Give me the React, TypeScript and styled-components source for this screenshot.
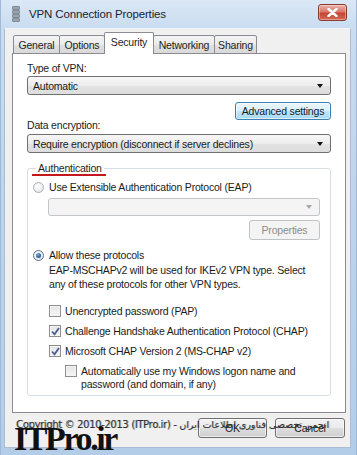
import React from "react";
import styled, { createGlobalStyle, css } from "styled-components";

const Global = createGlobalStyle`
  html, body { margin: 0; padding: 0; width: 357px; height: 455px; overflow: hidden; background: #c8daee; }
  * { box-sizing: border-box; }
`;

const Win = styled.div`
  position: relative;
  width: 357px;
  height: 455px;
  display: flex;
  flex-direction: column;
  background: linear-gradient(180deg, #dbe8f6 0px, #c9dcf0 28px, #bfd4ec 200px, #b3cde9 100%);
  border-left: 1px solid #9fb9d8;
  border-right: 1px solid #9fb9d8;
  font-family: "Liberation Sans", Arial, sans-serif;
  font-size: 10.5px;
  letter-spacing: -0.2px;
  color: #1b1b1b;
  overflow: hidden;
`;

const TitleBar = styled.div`
  height: 28px;
  flex: none;
  display: flex;
  align-items: center;
  padding: 0 9px 0 11px;
`;

const Title = styled.div`
  margin-left: 9px;
  font-size: 11.5px;
  letter-spacing: -0.15px;
  color: #1a2433;
`;

const CloseBtn = styled.div`
  margin-left: auto;
  margin-top: -3px;
  width: 29px;
  height: 17px;
  border: 1px solid #8a3a30;
  border-radius: 3px;
  background: linear-gradient(180deg, #eab3aa 0%, #d9796c 45%, #c54534 55%, #d36a52 100%);
  display: flex;
  align-items: center;
  justify-content: center;
  box-shadow: inset 0 0 0 1px rgba(255, 255, 255, 0.35);
`;

const Client = styled.div`
  flex: 1;
  margin: 0 5px 7px 3px;
  background: #f0f0f0;
  display: flex;
  flex-direction: column;
  padding-top: 3px;
  border: 1px solid #a9bdd4;
  border-top-color: #eef4fa;
`;

const TabStrip = styled.div`
  display: flex;
  align-items: flex-end;
  height: 22px;
  padding-left: 9px;
  position: relative;
  z-index: 1;
  margin-bottom: -1px;
`;

const Tab = styled.div<{ $w: number; $sel?: boolean }>`
  width: ${(p) => p.$w}px;
  margin-left: -1px;
  display: flex;
  align-items: center;
  justify-content: center;
  border: 1px solid #898c95;
  border-bottom: none;
  border-radius: 2px 2px 0 0;
  color: #1e1e1e;
  font-size: 10.5px;
  ${(p) =>
    p.$sel
      ? css`
          height: 22px;
          background: #ffffff;
          padding-bottom: 3px;
        `
      : css`
          height: 19px;
          background: linear-gradient(180deg, #f4f4f4 0%, #ebebeb 50%, #e1e1e1 51%, #d9d9d9 100%);
          border-bottom: 1px solid #898c95;
        `}
`;

const Panel = styled.div`
  margin: 0 4px 0 7px;
  height: 360px;
  flex: none;
  background: #ffffff;
  border: 1px solid #898c95;
  padding: 8px 14px 0 14px;
  display: flex;
  flex-direction: column;
`;

const Label = styled.div<{ $mt?: number }>`
  line-height: 13px;
  height: 13px;
  margin-top: ${(p) => p.$mt ?? 0}px;
  white-space: nowrap;
`;

const Combo = styled.div<{ $disabled?: boolean; $mt?: number; $ml?: number; $h?: number }>`
  height: ${(p) => p.$h ?? 19}px;
  margin-top: ${(p) => p.$mt ?? 0}px;
  margin-left: ${(p) => p.$ml ?? 0}px;
  border: 1px solid ${(p) => (p.$disabled ? "#c3c6c9" : "#707070")};
  border-radius: 3px;
  background: ${(p) =>
    p.$disabled ? "#f4f4f4" : "linear-gradient(180deg, #f7f7f7 0%, #ececec 50%, #e3e3e3 51%, #dddddd 100%)"};
  display: flex;
  align-items: center;
  padding: 0 7px 0 5px;
  white-space: nowrap;
`;

const Caret = styled.span<{ $disabled?: boolean }>`
  margin-left: auto;
  width: 0;
  height: 0;
  border-left: 3.5px solid transparent;
  border-right: 3.5px solid transparent;
  border-top: 4px solid ${(p) => (p.$disabled ? "#a8a8a8" : "#111")};
`;

const BtnRow = styled.div<{ $mt?: number }>`
  display: flex;
  justify-content: flex-end;
  margin-top: ${(p) => p.$mt ?? 0}px;
`;

const Button = styled.div<{ $w: number; $h?: number; $kind?: "hot" | "disabled" | "normal" }>`
  width: ${(p) => p.$w}px;
  height: ${(p) => p.$h ?? 20}px;
  border-radius: 3px;
  display: flex;
  align-items: center;
  justify-content: center;
  white-space: nowrap;
  ${(p) =>
    p.$kind === "hot"
      ? css`
          border: 1px solid #3c7fb1;
          background: linear-gradient(180deg, #eaf6fd 0%, #d9f0fc 50%, #bee6fd 51%, #a7d9f5 100%);
          color: #1b1b1b;
          box-shadow: inset 0 0 0 1px rgba(255, 255, 255, 0.6);
        `
      : p.$kind === "disabled"
      ? css`
          border: 1px solid #c0c3c6;
          background: #f4f4f4;
          color: #8c8c8c;
        `
      : css`
          border: 1px solid #707070;
          background: linear-gradient(180deg, #f2f2f2 0%, #ebebeb 50%, #dddddd 51%, #cfcfcf 100%);
          color: #1b1b1b;
          box-shadow: inset 0 0 0 1px rgba(255, 255, 255, 0.6);
        `}
`;

const Group = styled.fieldset`
  margin: 9px 0 0 0;
  padding: 0 10px 4px 5px;
  border: 1px solid #d5dfe5;
  border-radius: 3px;
  min-width: 0;
  display: flex;
  flex-direction: column;
`;

const Legend = styled.legend`
  position: relative;
  margin-left: 3px;
  padding: 0 2px;
  line-height: 13px;
  color: #1e1e1e;
  &::after {
    content: "";
    position: absolute;
    left: -4px;
    right: -2px;
    bottom: -1px;
    height: 2px;
    background: #c4161c;
  }
`;

const OptRow = styled.div<{ $mt?: number; $ml?: number }>`
  display: flex;
  align-items: flex-start;
  margin-top: ${(p) => p.$mt ?? 0}px;
  margin-left: ${(p) => p.$ml ?? 0}px;
  line-height: 13px;
`;

const RadioBox = styled.span<{ $on?: boolean }>`
  width: 11px;
  height: 11px;
  margin: 1px 5px 0 0;
  flex: none;
  border-radius: 50%;
  border: 1px solid ${(p) => (p.$on ? "#5a6f8e" : "#a9aeb4")};
  background: radial-gradient(circle at 40% 35%, #ffffff 0%, #eceef0 60%, #d6d9dd 100%);
  display: flex;
  align-items: center;
  justify-content: center;
  &::after {
    content: "";
    display: ${(p) => (p.$on ? "block" : "none")};
    width: 5px;
    height: 5px;
    border-radius: 50%;
    background: radial-gradient(circle at 40% 35%, #7eb3de 0%, #24619f 60%, #12365f 100%);
  }
`;

const CheckBox = styled.span`
  width: 12px;
  height: 12px;
  margin: 0 4px 0 0;
  flex: none;
  border: 1px solid #8f8f8f;
  background: linear-gradient(180deg, #e4e4e4 0%, #f6f6f6 100%);
  box-shadow: inset 0 0 0 1px #f4f4f4;
  display: flex;
  align-items: center;
  justify-content: center;
`;

const Text = styled.div<{ $mt?: number; $ml?: number }>`
  margin-top: ${(p) => p.$mt ?? 0}px;
  margin-left: ${(p) => p.$ml ?? 0}px;
  line-height: 14px;
`;

const Footer = styled.div`
  display: flex;
  justify-content: flex-end;
  gap: 8px;
  padding: 5px 5px 0 0;
`;

const Copyright = styled.div`
  position: absolute;
  left: 15px;
  top: 419px;
  font-family: "DejaVu Sans", "Liberation Sans", sans-serif;
  font-size: 10px;
  letter-spacing: -0.35px;
  line-height: 12px;
  color: #2e2e2e;
  white-space: nowrap;
  text-shadow: 1px 0 0 rgba(40, 40, 40, 0.35);
  direction: ltr;
`;

const Persian = styled.span`
  font-size: 9.5px;
  letter-spacing: 0;
`;

const Brand = styled.div`
  position: absolute;
  left: 13px;
  top: 422px;
  font-family: "Liberation Serif", "Times New Roman", serif;
  font-weight: bold;
  font-size: 34px;
  line-height: 34px;
  letter-spacing: -2.4px;
  color: #111;
  white-space: nowrap;
`;

const VpnIcon = () => (
  <svg width="8" height="17" viewBox="0 0 8 17">
    {[0, 4, 8, 12].map((y) => (
      <rect key={y} x="0.5" y={y + 0.5} width="7" height="3" rx="0.5" fill="#9aa3ad" stroke="#6d7680" strokeWidth="0.7" />
    ))}
  </svg>
);

const XIcon = () => (
  <svg width="11" height="9" viewBox="0 0 11 9">
    <path d="M1.5 1 L9.5 8 M9.5 1 L1.5 8" stroke="#fff" strokeWidth="2.4" strokeLinecap="round" />
  </svg>
);

const Tick = () => (
  <svg width="9" height="9" viewBox="0 0 9 9">
    <path d="M1 4.5 L3.5 7.3 L8 1" fill="none" stroke="#4a5d8f" strokeWidth="1.8" />
  </svg>
);

const Radio = ({ on, children }: { on?: boolean; children: React.ReactNode }) => (
  <>
    <RadioBox $on={on} />
    <span>{children}</span>
  </>
);

const Check = ({ on }: { on?: boolean }) => <CheckBox>{on ? <Tick /> : null}</CheckBox>;

export default function App() {
  return (
    <Win>
      <Global />
      <TitleBar>
        <VpnIcon />
        <Title>VPN Connection Properties</Title>
        <CloseBtn>
          <XIcon />
        </CloseBtn>
      </TitleBar>
      <Client>
        <TabStrip>
          <Tab $w={47}>General</Tab>
          <Tab $w={46}>Options</Tab>
          <Tab $w={50} $sel>
            Security
          </Tab>
          <Tab $w={62}>Networking</Tab>
          <Tab $w={43}>Sharing</Tab>
        </TabStrip>
        <Panel>
          <Label>Type of VPN:</Label>
          <Combo $mt={1}>
            Automatic
            <Caret />
          </Combo>
          <BtnRow $mt={7}>
            <Button $w={96} $h={18} $kind="hot">
              Advanced settings
            </Button>
          </BtnRow>
          <Label $mt={-1}>Data encryption:</Label>
          <Combo $mt={2}>
            Require encryption (disconnect if server declines)
            <Caret />
          </Combo>
          <Group>
            <Legend>Authentication</Legend>
            <OptRow $mt={6}>
              <Radio>Use Extensible Authentication Protocol (EAP)</Radio>
            </OptRow>
            <Combo $disabled $mt={4} $ml={15} $h={18}>
              <Caret $disabled />
            </Combo>
            <BtnRow $mt={4}>
              <Button $w={71} $h={20} $kind="disabled">
                Properties
              </Button>
            </BtnRow>
            <OptRow $mt={9}>
              <Radio on>Allow these protocols</Radio>
            </OptRow>
            <Text $mt={1} $ml={16}>
              EAP-MSCHAPv2 will be used for IKEv2 VPN type. Select
              <br />
              any of these protocols for other VPN types.
            </Text>
            <OptRow $mt={14} $ml={16}>
              <Check />
              <span>Unencrypted password (PAP)</span>
            </OptRow>
            <OptRow $mt={7} $ml={16}>
              <Check on />
              <span>Challenge Handshake Authentication Protocol (CHAP)</span>
            </OptRow>
            <OptRow $mt={7} $ml={16}>
              <Check on />
              <span>Microsoft CHAP Version 2 (MS-CHAP v2)</span>
            </OptRow>
            <OptRow $mt={7} $ml={32}>
              <Check />
              <span>
                Automatically use my Windows logon name and
                <br />
                password (and domain, if any)
              </span>
            </OptRow>
          </Group>
        </Panel>
        <Footer>
          <Button $w={69}>OK</Button>
          <Button $w={70}>Cancel</Button>
        </Footer>
      </Client>
      <Copyright>
        Copyright © 2010-2013 (ITPro.ir) - <Persian dir="rtl">انجمن تخصصی فناوری اطلاعات ایران</Persian>
      </Copyright>
      <Brand>ITPro.ir</Brand>
    </Win>
  );
}
